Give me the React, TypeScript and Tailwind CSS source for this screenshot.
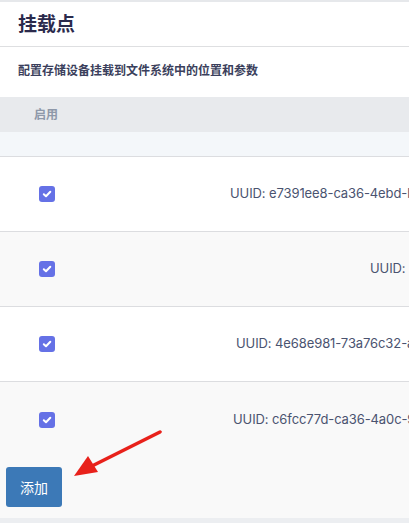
import React from "react";

function Check() {
  return (
    <span className="flex h-[16px] w-[16px] items-center justify-center rounded-[3px] bg-[#6571e6]">
      <svg width="10" height="10" viewBox="0 0 10 10">
        <path d="M1.8 5.2 L4 7.3 L8.3 2.8" fill="none" stroke="#fff" strokeWidth="2" strokeLinecap="round" strokeLinejoin="round" />
      </svg>
    </span>
  );
}

const rows = [
  { text: "UUID: e7391ee8-ca36-4ebd-b1a0-5c0d2e8f0a11", pl: "pl-[174px]", bg: "bg-white" },
  { text: "UUID: 9a1f0c3e-77b2-4d51-9e3a-0f3b5c8a2d44", pl: "pl-[314px]", bg: "bg-[#f9f9f9]" },
  { text: "UUID: 4e68e981-73a76c32-a1b2-4c5d-8e9f", pl: "pl-[180px]", bg: "bg-white" },
  { text: "UUID: c6fcc77d-ca36-4a0c-9b8e-7d6f5e4c3b2a", pl: "pl-[177px]", bg: "bg-[#f9f9f9]" },
];

export default function App() {
  return (
    <div
      className="relative h-[523px] w-[409px] overflow-hidden bg-white"
      style={{ fontFamily: "Inter, 'Noto Sans CJK SC', sans-serif" }}
    >
      <div className="h-[2px] bg-[#e6e8eb]" />
      <div className="flex h-[45px] items-center border-b border-[#dedfe1] pl-[18px]">
        <span className="text-[19px] font-bold leading-none text-[#2b2a4c]">挂载点</span>
      </div>
      <div className="flex h-[50px] items-center pl-[18px] pb-[2px]">
        <span className="text-[12px] font-semibold text-[#3b3f5c]">配置存储设备挂载到文件系统中的位置和参数</span>
      </div>
      <div className="flex h-[35px] items-center bg-[#e8eaed] pl-[34px] pt-[1px]">
        <span className="text-[12px] font-bold text-[#8e98a9]">启用</span>
      </div>
      <div className="h-[25px] border-b border-[#dcdde0] bg-[#f4f7fa]" />
      {rows.map((r, i) => (
        <div
          key={i}
          className={`flex h-[75px] items-center border-b border-[#dcdde0] ${r.bg} ${i === 3 ? "border-b-0" : ""}`}
        >
          <div className="flex w-[56px] shrink-0 justify-end pr-[1px]">
            <Check />
          </div>
          <span className={`whitespace-nowrap text-[13px] tracking-[-0.1px] text-[#4a5370] ${r.pl}`}>{r.text}</span>
        </div>
      ))}
      <div className="h-[61px] bg-[#f9f9f9] pl-[6px] pt-[10px]">
        <button className="flex h-[40px] w-[56px] items-center justify-center rounded-[3px] bg-[#3c79b7] text-[14px] text-white">
          添加
        </button>
      </div>
      <div className="h-[10px] bg-[#eceef1]" />
      <svg className="pointer-events-none absolute left-0 top-0" width="409" height="523">
        <line x1="160" y1="432" x2="92" y2="466" stroke="#e8211b" strokeWidth="3.5" strokeLinecap="round" />
        <polygon points="74,476 88,456 98,472" fill="#e8211b" />
      </svg>
    </div>
  );
}
